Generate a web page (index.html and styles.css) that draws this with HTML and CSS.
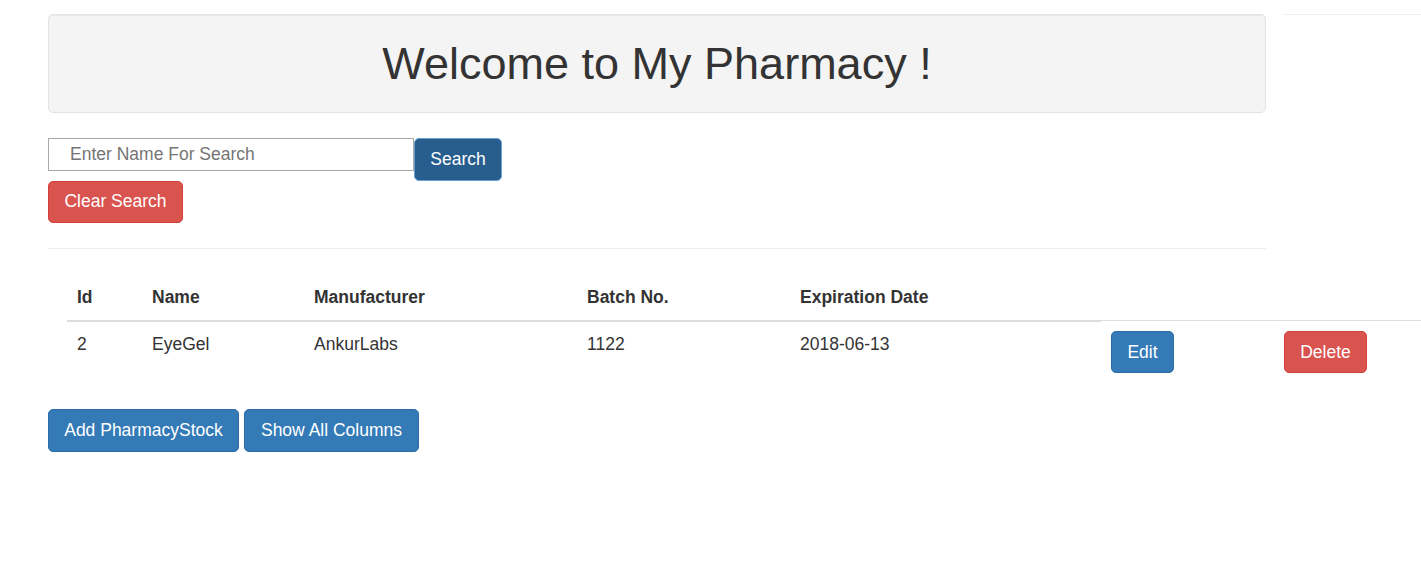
FILE: index.html
```html
<!DOCTYPE html>
<html lang="en">
<head>
<meta charset="utf-8">
<title>My Pharmacy</title>
<link rel="stylesheet" href="styles.css">
</head>
<body>
<div class="top-row">
  <div class="main-col">
    <div class="well">
      <h1 class="title">Welcome to My Pharmacy !</h1>
    </div>
    <div class="search-row">
      <input class="search-input" type="text" placeholder="Enter Name For Search">
      <button class="btn btn-search">Search</button>
    </div>
    <div class="clear-row">
      <button class="btn btn-danger">Clear Search</button>
    </div>
    <hr class="divider">
  </div>
  <div class="side-col"></div>
</div>
<div class="table-wrap">
  <table class="stock-table">
    <colgroup>
      <col class="c-id">
      <col class="c-name">
      <col class="c-man">
      <col class="c-batch">
      <col class="c-exp">
      <col class="c-edit">
      <col class="c-del">
    </colgroup>
    <thead>
      <tr>
        <th>Id</th>
        <th>Name</th>
        <th>Manufacturer</th>
        <th>Batch No.</th>
        <th>Expiration Date</th>
      </tr>
    </thead>
    <tbody>
      <tr>
        <td>2</td>
        <td>EyeGel</td>
        <td>AnkurLabs</td>
        <td>1122</td>
        <td>2018-06-13</td>
        <td><button class="btn btn-primary btn-edit">Edit</button></td>
        <td><button class="btn btn-danger btn-delete">Delete</button></td>
      </tr>
    </tbody>
  </table>
</div>
<div class="actions">
  <button class="btn btn-primary btn-add">Add PharmacyStock</button>
  <button class="btn btn-primary btn-show">Show All Columns</button>
</div>
</body>
</html>
```
FILE: styles.css
```css
* { box-sizing: border-box; }

html, body {
  margin: 0;
  padding: 0;
  background: #fff;
}

body {
  font-family: "Liberation Sans", Arial, sans-serif;
  font-size: 17.5px;
  line-height: 25px;
  color: #333;
  overflow-x: hidden;
}

.top-row {
  display: flex;
  padding-top: 14px;
}

.main-col {
  width: 1218px;
  margin-left: 48px;
  flex: none;
}

.side-col {
  flex: 1;
  margin-left: 17px;
  border-top: 1px solid #eee;
  height: 1px;
}

.well {
  background: #f4f4f4;
  border: 1px solid #e3e3e3;
  border-radius: 5px;
  box-shadow: inset 0 1px 1px rgba(0,0,0,0.05);
  padding: 24px 24px 23px;
  margin-bottom: 25px;
}

.title {
  margin: 0;
  text-align: center;
  font-weight: 500;
  font-size: 45px;
  line-height: 49.5px;
  color: #333;
}

.search-row {
  display: flex;
  align-items: flex-start;
}

.search-input {
  width: 366px;
  height: 33px;
  border: 1px solid #a9a9a9;
  border-radius: 0;
  padding: 1px 0 0 21px;
  font-family: "Liberation Sans", Arial, sans-serif;
  font-size: 17.5px;
  color: #333;
  outline: none;
}

.search-input::placeholder {
  color: #757575;
}

.btn {
  display: inline-block;
  font-family: "Liberation Sans", Arial, sans-serif;
  font-size: 17.5px;
  line-height: 25px;
  padding: 7.5px 0;
  border: 1.25px solid transparent;
  border-radius: 5px;
  color: #fff;
  cursor: pointer;
  text-align: center;
  vertical-align: middle;
}

.btn-primary {
  background: #337ab7;
  border-color: #2e6da4;
}

.btn-danger {
  background: #d9534f;
  border-color: #d43f3a;
}

.btn-search {
  background: #285e8e;
  border-color: #6a9fd6;
  height: 43px;
  width: 88px;
}

.clear-row .btn {
  width: 135px;
  height: 42px;
}

.divider {
  border: 0;
  border-top: 1px solid #eee;
  margin: 25px 0 26px;
}

.table-wrap {
  padding-left: 67px;
}

.stock-table {
  border-collapse: collapse;
  width: 1354px;
  margin-bottom: 26px;
  table-layout: fixed;
}

.stock-table th,
.stock-table td {
  padding: 10px;
  text-align: left;
  vertical-align: top;
  line-height: 25px;
}

.stock-table th {
  font-weight: bold;
  border-bottom: 2px solid #ddd;
}

.stock-table td {
  border-top: 1px solid #ddd;
}

.c-id { width: 75px; }
.c-name { width: 162px; }
.c-man { width: 273px; }
.c-batch { width: 213px; }
.c-exp { width: 311px; }
.c-edit { width: 173px; }
.c-del { width: 147px; }

.btn-edit { width: 63px; height: 42px; }
.btn-delete { width: 83px; height: 42px; }

.actions {
  padding-left: 48px;
  display: flex;
  gap: 5px;
}

.btn-add { width: 191px; height: 43px; }
.btn-show { width: 175px; height: 43px; }
```
